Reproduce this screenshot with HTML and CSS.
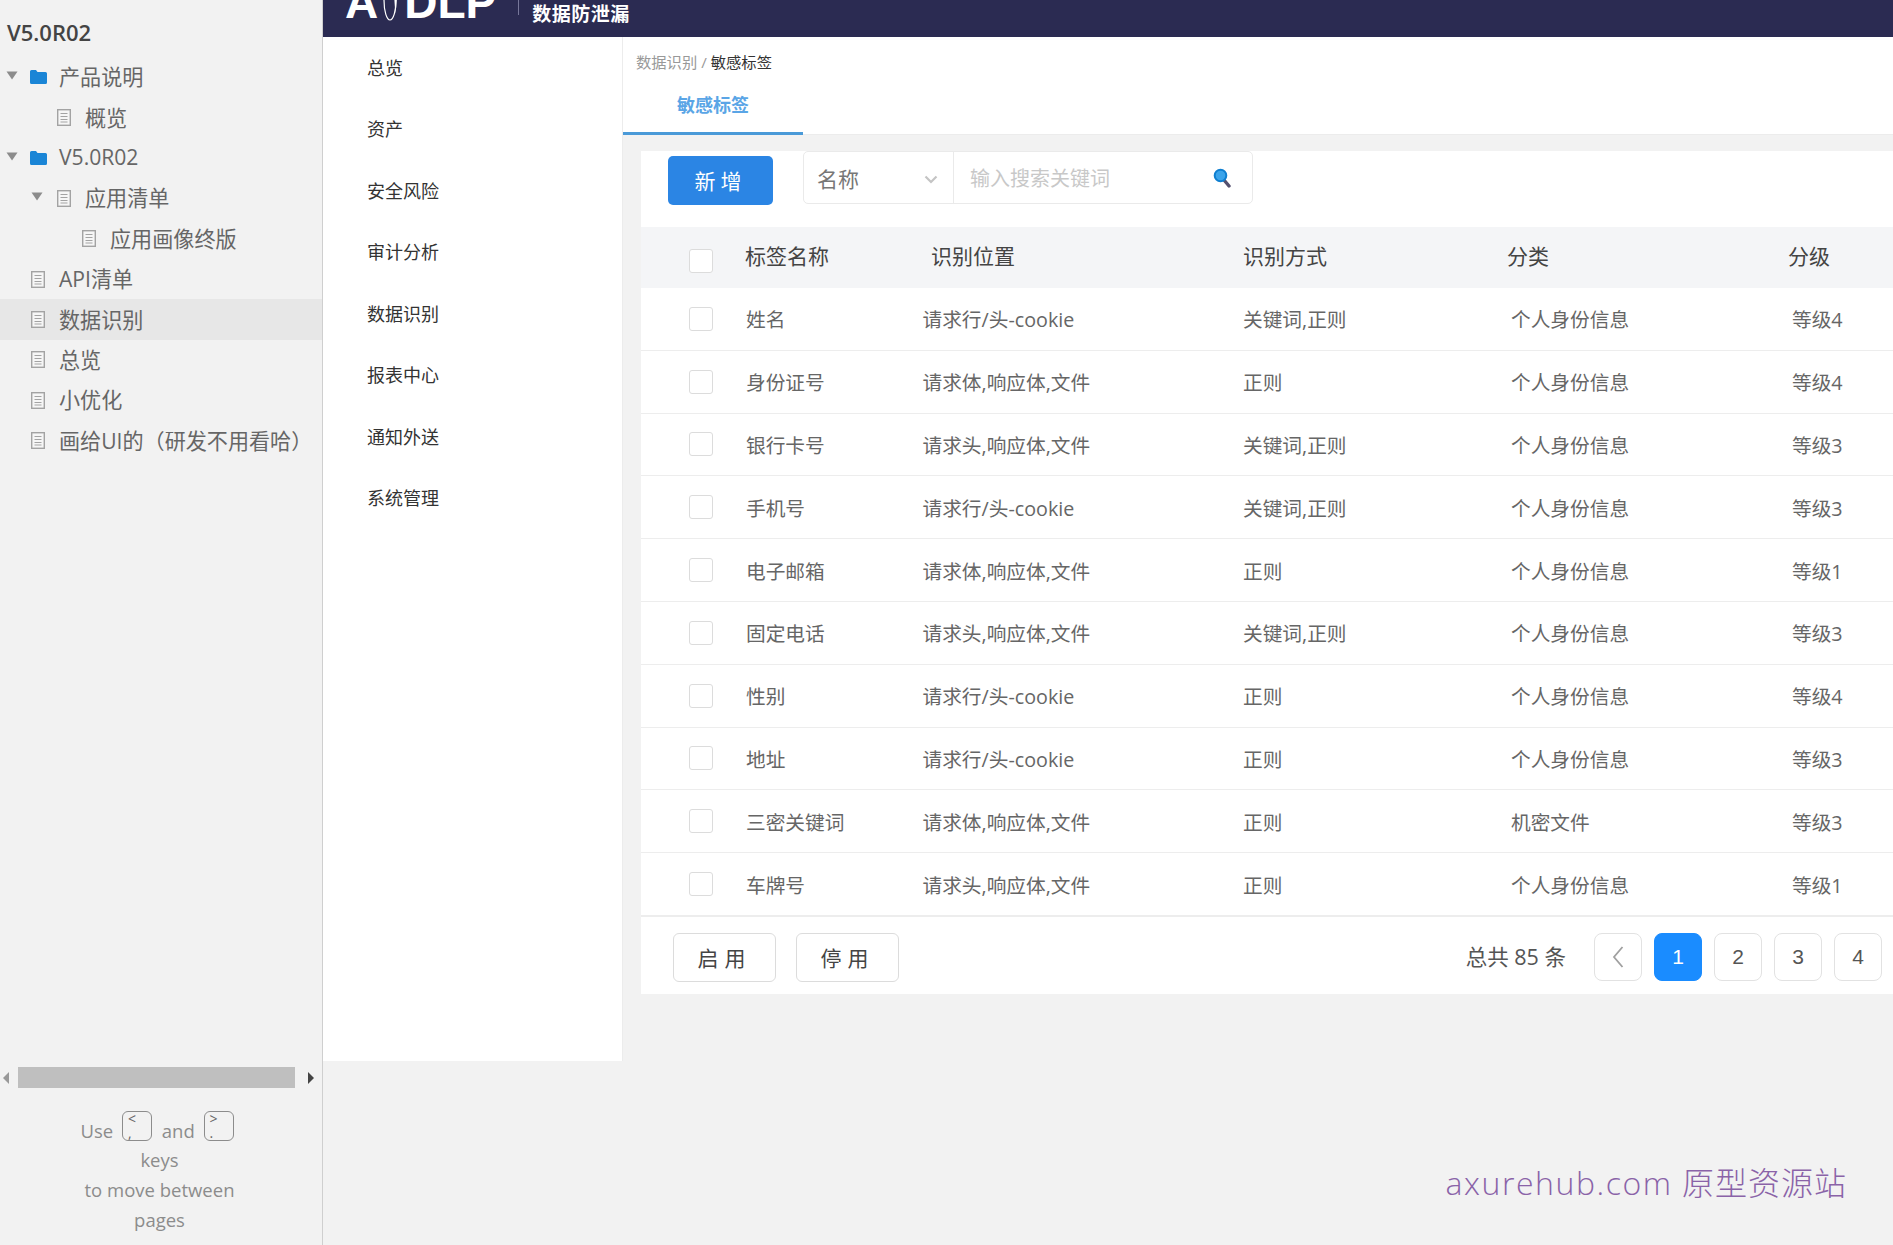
FILE: index.html
```html
<!DOCTYPE html>
<html>
<head>
<meta charset="utf-8">
<meta name="viewport" content="width=device-width, initial-scale=1">
<title>敏感标签</title>
<link rel="stylesheet" href="styles.css">
</head>
<body>

<svg class="defs" width="0" height="0">
  <symbol id="ico-folder" viewBox="0 0 17 14">
    <path d="M0 1.5Q0 0 1.5 0H6L7.5 2H15.500Q17 2 17 3.500V12.500Q17 14 15.500 14H1.500Q0 14 0 12.500Z" fill="#1a85d6"/>
  </symbol>
  <symbol id="ico-doc" viewBox="0 0 14 17">
    <rect x="0.700" y="0.700" width="12.600" height="15.600" fill="#f6f6f6" stroke="#a3a3a3" stroke-width="1.400"/>
    <path d="M3.500 4.500H10.500M3.500 7.500H10.500M3.500 10.500H10.500M3.500 13H10.500" stroke="#a3a3a3" stroke-width="1.200"/>
  </symbol>
  <symbol id="ico-arrow" viewBox="0 0 12 9">
    <path d="M0.500 0.500H11.500L6 8.500Z" fill="#8c8c8c"/>
  </symbol>
</svg>

<aside class="sidebar">
  <div class="version">V5.0R02</div>
  <div class="tree">
    <div class="tree-row"><svg class="arrow"><use href="#ico-arrow"/></svg><svg class="folder"><use href="#ico-folder"/></svg><span>产品说明</span></div>
    <div class="tree-row lv2"><svg class="doc"><use href="#ico-doc"/></svg><span>概览</span></div>
    <div class="tree-row"><svg class="arrow"><use href="#ico-arrow"/></svg><svg class="folder"><use href="#ico-folder"/></svg><span>V5.0R02</span></div>
    <div class="tree-row lv1"><svg class="arrow"><use href="#ico-arrow"/></svg><svg class="doc"><use href="#ico-doc"/></svg><span>应用清单</span></div>
    <div class="tree-row lv3"><svg class="doc"><use href="#ico-doc"/></svg><span>应用画像终版</span></div>
    <div class="tree-row lv1"><svg class="doc"><use href="#ico-doc"/></svg><span>API清单</span></div>
    <div class="tree-row lv1 selected"><svg class="doc"><use href="#ico-doc"/></svg><span>数据识别</span></div>
    <div class="tree-row lv1"><svg class="doc"><use href="#ico-doc"/></svg><span>总览</span></div>
    <div class="tree-row lv1"><svg class="doc"><use href="#ico-doc"/></svg><span>小优化</span></div>
    <div class="tree-row lv1"><svg class="doc"><use href="#ico-doc"/></svg><span>画给UI的（研发不用看哈）</span></div>
  </div>
  <div class="hscroll">
    <span class="scroll-left"></span>
    <div class="scroll-thumb"></div>
    <span class="scroll-right"></span>
  </div>
  <div class="help">
    <div class="help-line help-keys">Use <span class="key">&lt;<br>,</span> and <span class="key">&gt;<br>.</span></div>
    <div class="help-line">keys</div>
    <div class="help-line">to move between</div>
    <div class="help-line">pages</div>
  </div>
</aside>

<div class="main">
  <div class="header">
    <div class="logo">
      <span>A</span>
      <svg class="logo-mark" viewBox="0 0 16 44"><ellipse cx="7" cy="22" rx="6" ry="20" fill="none" stroke="#fff" stroke-width="1.200"/><path d="M12.500 12Q15 22 12 36Q12 22 10 12Z" fill="#fff"/></svg>
      <span>DLP</span>
    </div>
    <div class="logo-sep"></div>
    <div class="logo-name">数据防泄漏</div>
  </div>

  <div class="body-row">
    <ul class="nav">
      <li>总览</li>
      <li>资产</li>
      <li>安全风险</li>
      <li>审计分析</li>
      <li>数据识别</li>
      <li>报表中心</li>
      <li>通知外送</li>
      <li>系统管理</li>
    </ul>

    <div class="content">
      <div class="top">
        <div class="crumb"><span class="crumb-parent">数据识别 /</span> 敏感标签</div>
        <div class="tab">敏感标签</div>
      </div>

      <div class="panel">
        <div class="toolbar">
          <button class="btn-add">新增</button>
          <div class="search">
            <div class="search-type">
              <span>名称</span>
              <svg class="chevron" viewBox="0 0 14 9"><path d="M1.500 1.500L7 7L12.500 1.500" fill="none" stroke="#c4c4c4" stroke-width="2.200"/></svg>
            </div>
            <div class="search-input">
              <span>输入搜索关键词</span>
              <svg class="magnifier" viewBox="0 0 18 20"><path d="M11 12L16 18" stroke="#54506e" stroke-width="3.400" stroke-linecap="round"/><circle cx="7.500" cy="7.500" r="5.800" fill="#3ba4ea" stroke="#0f7fd0" stroke-width="2"/></svg>
            </div>
          </div>
        </div>

        <div class="thead">
          <div><span class="check check-head"></span></div>
          <div>标签名称</div>
          <div>识别位置</div>
          <div>识别方式</div>
          <div>分类</div>
          <div>分级</div>
        </div>

        <div class="row"><div><span class="check"></span></div><div>姓名</div><div>请求行/头-cookie</div><div>关键词,正则</div><div>个人身份信息</div><div>等级4</div></div>
        <div class="row"><div><span class="check"></span></div><div>身份证号</div><div>请求体,响应体,文件</div><div>正则</div><div>个人身份信息</div><div>等级4</div></div>
        <div class="row"><div><span class="check"></span></div><div>银行卡号</div><div>请求头,响应体,文件</div><div>关键词,正则</div><div>个人身份信息</div><div>等级3</div></div>
        <div class="row"><div><span class="check"></span></div><div>手机号</div><div>请求行/头-cookie</div><div>关键词,正则</div><div>个人身份信息</div><div>等级3</div></div>
        <div class="row"><div><span class="check"></span></div><div>电子邮箱</div><div>请求体,响应体,文件</div><div>正则</div><div>个人身份信息</div><div>等级1</div></div>
        <div class="row"><div><span class="check"></span></div><div>固定电话</div><div>请求头,响应体,文件</div><div>关键词,正则</div><div>个人身份信息</div><div>等级3</div></div>
        <div class="row"><div><span class="check"></span></div><div>性别</div><div>请求行/头-cookie</div><div>正则</div><div>个人身份信息</div><div>等级4</div></div>
        <div class="row"><div><span class="check"></span></div><div>地址</div><div>请求行/头-cookie</div><div>正则</div><div>个人身份信息</div><div>等级3</div></div>
        <div class="row"><div><span class="check"></span></div><div>三密关键词</div><div>请求体,响应体,文件</div><div>正则</div><div>机密文件</div><div>等级3</div></div>
        <div class="row"><div><span class="check"></span></div><div>车牌号</div><div>请求头,响应体,文件</div><div>正则</div><div>个人身份信息</div><div>等级1</div></div>

        <div class="footer">
          <div class="actions">
            <button class="btn">启用</button>
            <button class="btn">停用</button>
          </div>
          <div class="pager">
            <span class="total">总共 85 条</span>
            <span class="page"><svg class="prev" viewBox="0 0 12 24"><path d="M10.500 2L2 12L10.500 22" fill="none" stroke="#a0a0a0" stroke-width="1.800"/></svg></span>
            <span class="page active">1</span>
            <span class="page">2</span>
            <span class="page">3</span>
            <span class="page">4</span>
          </div>
        </div>
      </div>

      <div class="watermark"><span class="watermark-site">axurehub.com</span> 原型资源站</div>
    </div>
  </div>
</div>

</body>
</html>
```

FILE: styles.css
```css
* {
  box-sizing: border-box;
}

html, body {
  height: 100%;
}

body {
  margin: 0;
  display: flex;
  overflow: hidden;
  background: #f2f2f2;
  font-family: "Open Sans", "Noto Sans CJK SC", sans-serif;
  color: #666;
}

.defs {
  position: absolute;
}

/* Left page tree */
.sidebar {
  width: 323px;
  flex: none;
  display: flex;
  flex-direction: column;
  border-right: 1px solid #cfcfcf;
}

.version {
  height: 57px;
  padding: 19px 0 0 7px;
  font-size: 22px;
  line-height: 26px;
  font-weight: 600;
  color: #444;
}

.tree {
  flex: 1;
  font-size: 21.100px;
  color: #666;
}

.tree-row {
  display: flex;
  align-items: center;
  height: 40.400px;
  padding-left: 6px;
  white-space: nowrap;
}

.tree-row.lv1 { padding-left: 31px; }
.tree-row.lv2 { padding-left: 57px; }
.tree-row.lv3 { padding-left: 82px; }

.tree-row span {
  padding-bottom: 2px;
}

.tree-row .doc + span { margin-left: 14px; }
.tree-row .folder + span { margin-left: 12px; }

.tree-row.selected {
  background: #e7e7e7;
}

.arrow {
  width: 12px;
  height: 9px;
  margin-right: 12px;
  margin-top: -3px;
}

.tree-row.lv1 .arrow { margin-right: 14px; }

.folder {
  width: 17px;
  height: 14px;
}

.doc {
  width: 14px;
  height: 17px;
}

.hscroll {
  display: flex;
  align-items: center;
  height: 21px;
  padding: 0 8px 0 3px;
  flex: none;
}

.scroll-thumb {
  width: 277px;
  height: 21px;
  margin: 0 8px 0 4px;
  background: #bfbfbf;
}

.scroll-left {
  border: 6px solid transparent;
  border-left: 0;
  border-right: 6px solid #999;
  margin-right: 5px;
}

.scroll-right {
  border: 6px solid transparent;
  border-right: 0;
  border-left: 6px solid #444;
  margin-left: 5px;
}

.help {
  height: 157px;
  padding: 27px 3px 0 0;
  text-align: center;
  font-size: 18.500px;
  color: #8c8c8c;
  flex: none;
}

.help-line {
  height: 30px;
  line-height: 30px;
}

.help-keys {
  margin: -4px 0 4px;
}

.key {
  display: inline-block;
  width: 30px;
  height: 30px;
  margin: 0 5px 0 4px;
  padding: 0 0 0 5px;
  border: 1.500px solid #8c8c8c;
  border-radius: 6px;
  font-size: 14px;
  line-height: 14px;
  text-align: left;
  color: #666;
  vertical-align: 0;
}

/* Main area */
.main {
  flex: 1;
  min-width: 0;
}

.header {
  display: flex;
  align-items: flex-start;
  height: 37px;
  overflow: hidden;
  background: #2b2b52;
  color: #fff;
}

.logo {
  display: flex;
  align-items: flex-end;
  height: 20px;
  margin-left: 22px;
  font-family: "Liberation Sans", sans-serif;
  font-size: 46px;
  font-weight: 700;
  line-height: 20px;
}

.logo span {
  display: block;
  height: 20px;
  line-height: 4px;
}

.logo-mark {
  width: 16px;
  height: 44px;
  flex: none;
  margin: -22px 5px -2px 5px;
}

.logo-sep {
  width: 1px;
  height: 15px;
  margin-left: 22px;
  background: #77779a;
}

.logo-name {
  margin: 1px 0 0 13px;
  font-size: 19px;
  line-height: 26px;
  font-weight: 700;
  letter-spacing: 0.500px;
  white-space: nowrap;
}

.body-row {
  display: flex;
}

.nav {
  width: 300px;
  height: 1024px;
  flex: none;
  margin: 0;
  padding: 0.500px 0 0 44px;
  list-style: none;
  background: #fff;
  border-right: 1px solid #ececec;
  font-size: 18px;
  color: #333;
}

.nav li {
  height: 61.500px;
  line-height: 61.500px;
}

.content {
  flex: 1;
  min-width: 0;
}

.top {
  height: 98px;
  background: #fff;
  border-bottom: 1px solid #ececec;
}

.crumb {
  padding: 13px 0 0 13px;
  height: 52px;
  font-size: 15.300px;
  line-height: 24px;
  color: #333;
}

.crumb-parent {
  color: #999;
}

.tab {
  width: 180px;
  height: 46px;
  padding-left: 54px;
  border-bottom: 3px solid #4a9ad8;
  font-size: 18px;
  font-weight: 700;
  line-height: 32px;
  color: #5aa5e6;
}

.panel {
  margin: 16px 0 0 18px;
  background: #fff;
}

.toolbar {
  display: flex;
  height: 76px;
}

.btn-add {
  width: 105px;
  height: 49px;
  margin: 5px 0 0 27px;
  padding-bottom: 3px;
  border: 0;
  border-radius: 5px;
  background: #2b85e4;
  color: #fff;
  font-family: inherit;
  font-size: 21px;
  letter-spacing: 5px;
}

.search {
  display: flex;
  width: 450px;
  height: 53px;
  margin-left: 30px;
  border: 1px solid #eaeaea;
  border-radius: 5px;
}

.search-type {
  display: flex;
  align-items: center;
  justify-content: space-between;
  width: 150px;
  padding: 0 15px 0 13px;
  border-right: 1px solid #eaeaea;
  font-size: 21px;
  color: #777;
}

.chevron {
  width: 14px;
  height: 9px;
  margin-top: 4px;
}

.search-input {
  flex: 1;
  display: flex;
  align-items: center;
  justify-content: space-between;
  padding: 0 21px 0 16px;
  font-size: 20px;
  color: #c8c8c8;
}

.magnifier {
  width: 18px;
  height: 20px;
}

/* Table */
.thead, .row {
  display: grid;
  align-items: center;
}

.thead {
  grid-template-columns: 104px 186px 312px 264px 281px 1fr;
  height: 61px;
  padding-bottom: 5px;
  background: #f4f5f7;
  font-size: 21px;
  color: #444;
}

.row {
  grid-template-columns: 105px 176.500px 320.500px 268px 281px 1fr;
  height: 62.800px;
  border-bottom: 1px solid #ededed;
  font-size: 19.700px;
  color: #666;
}

.check {
  display: block;
  width: 24px;
  height: 24px;
  margin-left: 48px;
  border: 1.500px solid #dcdcdc;
  border-radius: 3px;
  background: #fff;
}

.check-head {
  margin-top: 11px;
}

.footer {
  display: flex;
  justify-content: space-between;
  height: 78px;
  padding: 16px 11px 0 32px;
  border-top: 1px solid #ededed;
}

.actions {
  display: flex;
  gap: 20px;
}

.btn {
  width: 103px;
  height: 49px;
  border: 1px solid #dcdcdc;
  border-radius: 6px;
  background: #fff;
  color: #444;
  font-family: inherit;
  font-size: 21px;
  letter-spacing: 6px;
}

.pager {
  display: flex;
  gap: 12px;
  align-items: flex-start;
}

.total {
  margin-right: 16px;
  font-size: 21.500px;
  line-height: 48px;
  color: #555;
}

.page {
  display: flex;
  align-items: center;
  justify-content: center;
  width: 48px;
  height: 48px;
  border: 1px solid #e2e2e2;
  border-radius: 8px;
  font-family: "Liberation Sans", sans-serif;
  font-size: 21px;
  color: #555;
}

.page.active {
  border-color: #1a8cff;
  background: #1a8cff;
  color: #fff;
}

.prev {
  width: 12px;
  height: 24px;
}

.watermark {
  margin-top: 167px;
  padding-right: 46px;
  text-align: right;
  font-size: 32px;
  font-weight: 300;
  line-height: 44px;
  letter-spacing: 1px;
  color: #8a63a8;
}

.watermark-site {
  letter-spacing: 1.550px;
}
```
